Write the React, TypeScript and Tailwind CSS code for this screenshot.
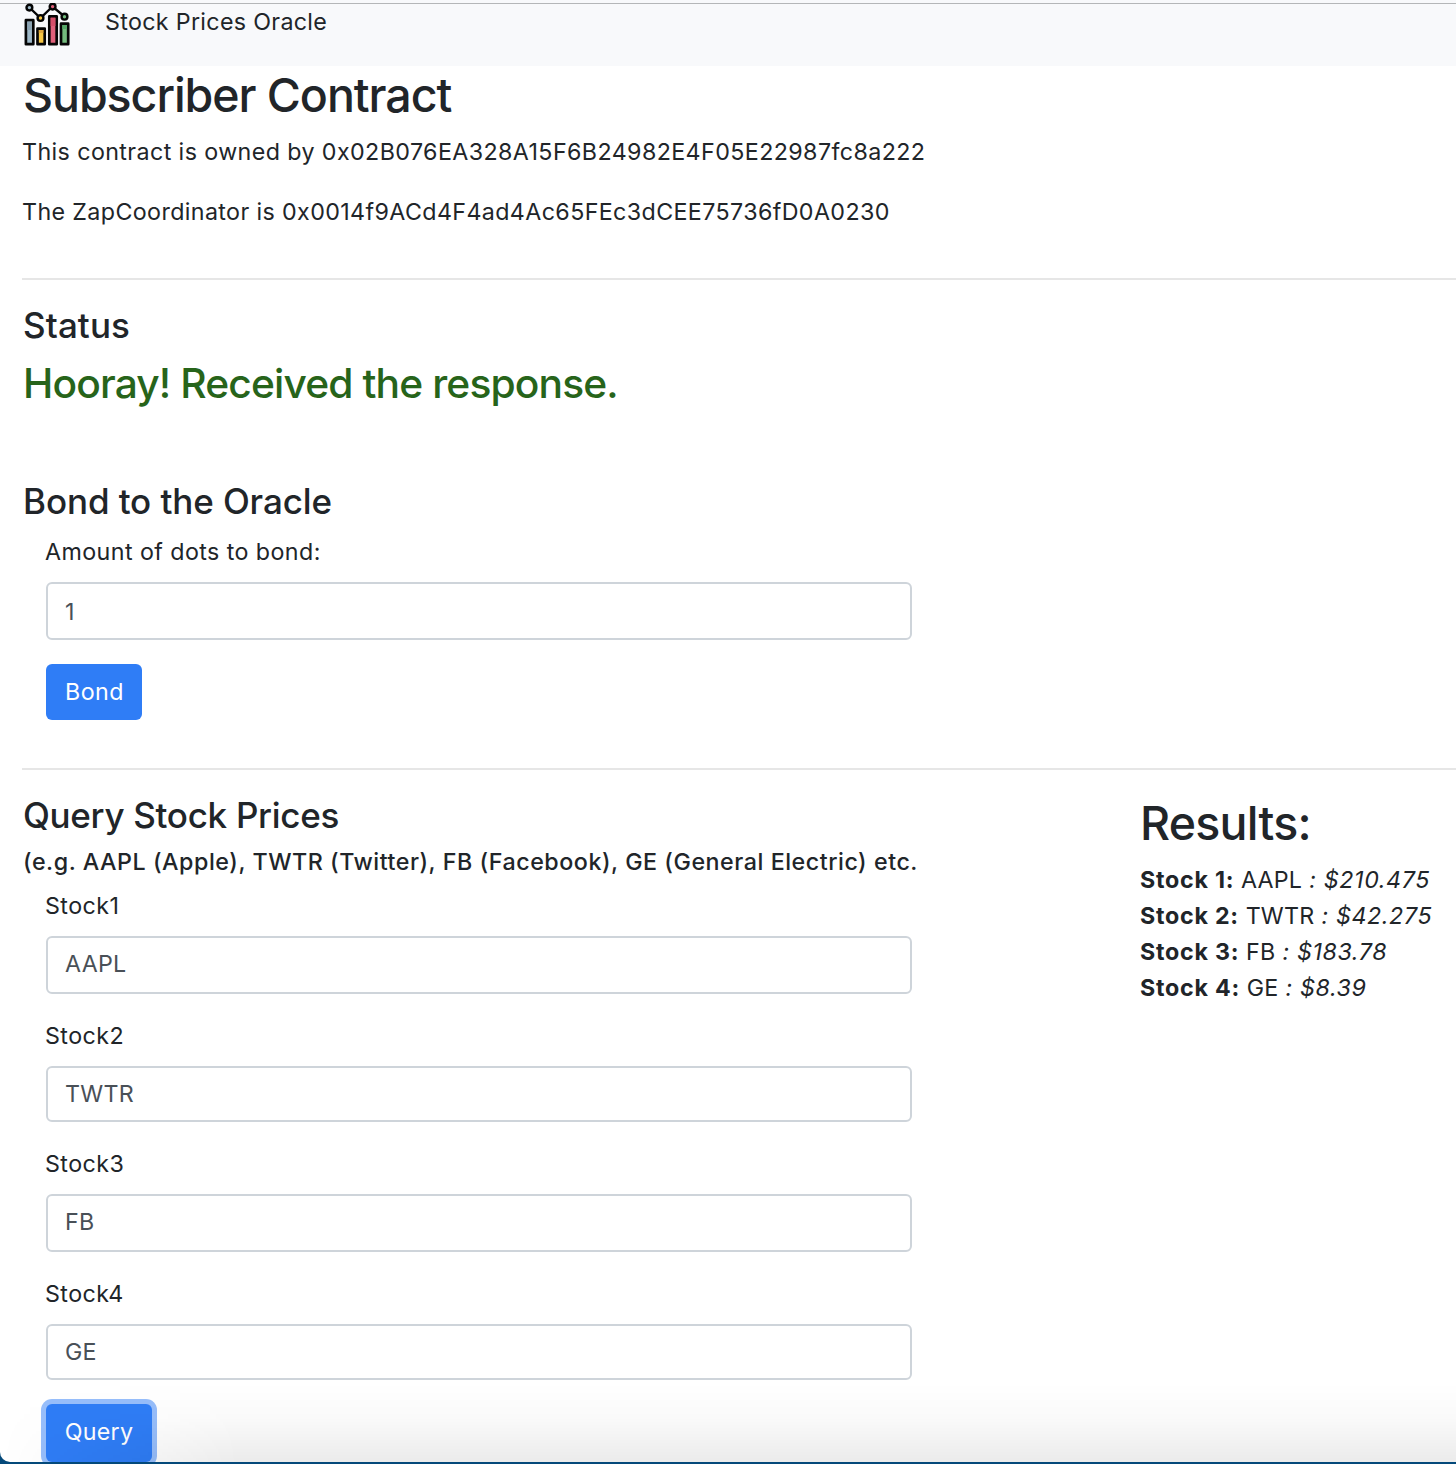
import type { ReactNode } from "react";

function ChartLogo() {
  return (
    <svg className="block h-[48px] w-[48px] shrink-0" viewBox="23 3 48 48" fill="none">
      <g stroke="#050505" strokeWidth="2.7" strokeLinejoin="round">
        <rect x="25.9" y="20.2" width="7.4" height="24" fill="#9fb9c8" />
        <rect x="37.5" y="28.6" width="7.2" height="15.6" fill="#f6c644" />
        <rect x="49.3" y="16.4" width="7.4" height="27.8" fill="#e0607a" />
        <rect x="61" y="23.7" width="7.2" height="20.5" fill="#74bb7d" />
      </g>
      <path d="M27.2 30h4.800v-8.400h-4.800z" fill="#8ba3b2" />
      <path d="M38.800 33h4.600v-3h-4.600z" fill="#dfa53a" />
      <path d="M50.600 26h4.800v-8.300h-4.800z" fill="#d64f6a" />
      <path d="M62.300 29h4.600v-4h-4.600z" fill="#55a566" />
      <path d="M29.400 7.500 40.500 18l12-11.500 12 10" stroke="#050505" strokeWidth="2.400" />
      <g stroke="#050505" strokeWidth="2.400">
        <circle cx="29.400" cy="7.600" r="2.900" fill="#9fb9c8" />
        <circle cx="40.500" cy="18" r="2.900" fill="#f6c644" />
        <circle cx="52.600" cy="6.600" r="2.900" fill="#e0607a" />
        <circle cx="64.500" cy="16.700" r="2.900" fill="#74bb7d" />
      </g>
    </svg>
  );
}

function Field({ label, value, className }: { label: string; value: string; className: string }) {
  return (
    <>
      <label className="-ml-px mb-3 block h-9 tracking-[0.42px]">{label}</label>
      <input
        defaultValue={value}
        className={`block w-[866px] rounded-[6px] border-2 border-[#ced4da] bg-white px-[17px] tracking-[0.25px] text-[#495057] outline-none ${className}`}
      />
    </>
  );
}

function Result({ n, symbol, price }: { n: number; symbol: string; price: string }) {
  return (
    <div className="h-9 whitespace-nowrap tracking-[0.2px]">
      <b className="font-bold tracking-[0.75px]">Stock {n}:</b> {symbol}
      <i className="tracking-[0.6px]"> : {price}</i>
    </div>
  );
}

function SectionTitle({ children }: { children: ReactNode }) {
  return <h4 className="h-[43px] pl-px text-[35px] leading-[43px] font-medium">{children}</h4>;
}

export default function App() {
  return (
    <div className="h-[1464px] w-[1456px] overflow-hidden bg-[#04497a] font-['Inter',sans-serif] text-[23.25px] leading-9 tracking-[0.4px] text-[#212529]">
      <div className="relative h-[1462px] overflow-hidden rounded-bl-[10px] bg-white">
        <header className="flex h-[66px] items-start border-t-[3px] border-[#f8f9fb] bg-[#f8f9fb] pl-[23px] shadow-[inset_0_1px_0_#b4b6b8]">
          <ChartLogo />
          <span className="mt-px ml-[34px] tracking-[0.32px]">Stock Prices Oracle</span>
        </header>

        <main className="pl-[22px]">
          <h2 className="h-[58px] pl-px text-[46.5px] leading-[58px] font-medium tracking-[-1.05px]">Subscriber Contract</h2>
          <p className="mt-[10px] h-9">This contract is owned by 0x02B076EA328A15F6B24982E4F05E22987fc8a222</p>
          <p className="mt-6 h-9 tracking-[0.38px]">The ZapCoordinator is 0x0014f9ACd4F4ad4Ac65FEc3dCEE75736fD0A0230</p>

          <hr className="mt-12 border-t-2 border-[#e6e6e6]" />

          <section className="mt-6 tracking-[0.1px]">
            <SectionTitle>Status</SectionTitle>
            <h3 className="mt-3 h-[50px] pl-px text-[40.75px] leading-[50px] font-medium tracking-[-0.88px] text-[#27641a]">
              Hooray! Received the response.
            </h3>
          </section>

          <section className="mt-[71px]">
            <div className="tracking-[-0.1px]">
              <SectionTitle>Bond to the Oracle</SectionTitle>
            </div>
            <div className="mt-[11px] pl-6">
              <Field label="Amount of dots to bond:" value="1" className="h-[58px]" />
              <button className="mt-6 block h-14 w-24 rounded-[6px] bg-[#2f7df6] pl-px tracking-[0.5px] text-white">Bond</button>
            </div>
          </section>

          <hr className="mt-12 border-t-2 border-[#e6e6e6]" />

          <div className="flex">
            <section className="mt-6 w-[1118px] shrink-0">
              <div className="tracking-[-0.3px]">
                <SectionTitle>Query Stock Prices</SectionTitle>
              </div>
              <h6 className="mt-[10px] h-[29px] pl-px leading-[29px] font-medium tracking-[0.54px]">
                (e.g. AAPL (Apple), TWTR (Twitter), FB (Facebook), GE (General Electric) etc.
              </h6>
              <div className="mt-3 pl-6">
                <Field label="Stock1" value="AAPL" className="mb-6 h-[58px] pb-[4px]" />
                <Field label="Stock2" value="TWTR" className="mb-6 h-14 pb-[2px]" />
                <Field label="Stock3" value="FB" className="mb-6 h-[58px] pb-[4px]" />
                <Field label="Stock4" value="GE" className="mb-6 h-14 pb-[2px]" />
                <button className="block h-[58px] w-[106px] rounded-[6px] bg-[#2f7df6] pb-[2px] tracking-[0.25px] text-white shadow-[0_0_0_5px_#97befb]">
                  Query
                </button>
              </div>
            </section>

            <section className="mt-6">
              <h2 className="h-[58px] text-[46.5px] leading-[58px] font-medium tracking-[-0.75px]">Results:</h2>
              <div className="mt-[10px]">
                <Result n={1} symbol="AAPL" price="$210.475" />
                <Result n={2} symbol="TWTR" price="$42.275" />
                <Result n={3} symbol="FB" price="$183.78" />
                <Result n={4} symbol="GE" price="$8.39" />
              </div>
            </section>
          </div>
        </main>

        <div className="pointer-events-none absolute inset-x-0 bottom-0 h-[80px] bg-[linear-gradient(to_bottom,transparent,rgba(0,0,0,0.02)_45%,rgba(0,0,0,0.08))] [mask-image:linear-gradient(to_right,transparent,black_240px)]" />
      </div>
    </div>
  );
}
